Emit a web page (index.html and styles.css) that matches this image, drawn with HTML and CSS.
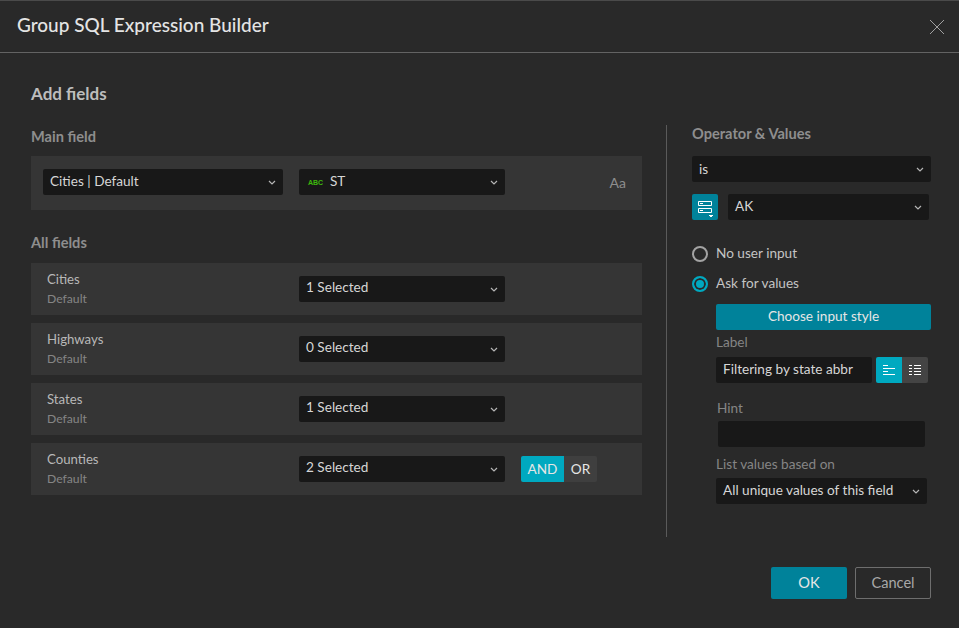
FILE: index.html
```html
<!DOCTYPE html>
<html lang="en">
<head>
    <meta charset="UTF-8">
    <meta name="viewport" content="width=device-width, initial-scale=1.0">
    <title>Group SQL Expression Builder</title>
    <link rel="stylesheet" href="styles.css">
</head>
<body>
    <div class="modal">
        <div class="modal-header">
            <h1>Group SQL Expression Builder</h1>
            <svg class="close-icon" width="16" height="16" viewBox="0 0 16 16"><path d="M1 1l14 14M15 1L1 15"/></svg>
        </div>

        <div class="modal-body">
            <div class="fields-panel">
                <h2>Add fields</h2>

                <h3 class="main-title">Main field</h3>
                <div class="main-row">
                    <div class="select main-layer">Cities | Default<svg class="chevron" width="8" height="5" viewBox="0 0 8 5"><path d="M1 1l3 3 3-3"/></svg></div>
                    <div class="select field-select"><span class="abc">ABC</span>ST<svg class="chevron" width="8" height="5" viewBox="0 0 8 5"><path d="M1 1l3 3 3-3"/></svg></div>
                    <span class="case">Aa</span>
                </div>

                <h3 class="all-title">All fields</h3>
                <div class="rows">
                    <div class="field-row">
                        <div class="layer"><div class="layer-name">Cities</div><div class="layer-sub">Default</div></div>
                        <div class="select field-select">1 Selected<svg class="chevron" width="8" height="5" viewBox="0 0 8 5"><path d="M1 1l3 3 3-3"/></svg></div>
                    </div>
                    <div class="field-row">
                        <div class="layer"><div class="layer-name">Highways</div><div class="layer-sub">Default</div></div>
                        <div class="select field-select">0 Selected<svg class="chevron" width="8" height="5" viewBox="0 0 8 5"><path d="M1 1l3 3 3-3"/></svg></div>
                    </div>
                    <div class="field-row">
                        <div class="layer"><div class="layer-name">States</div><div class="layer-sub">Default</div></div>
                        <div class="select field-select">1 Selected<svg class="chevron" width="8" height="5" viewBox="0 0 8 5"><path d="M1 1l3 3 3-3"/></svg></div>
                    </div>
                    <div class="field-row">
                        <div class="layer"><div class="layer-name">Counties</div><div class="layer-sub">Default</div></div>
                        <div class="select field-select">2 Selected<svg class="chevron" width="8" height="5" viewBox="0 0 8 5"><path d="M1 1l3 3 3-3"/></svg></div>
                        <div class="and-or">
                            <span class="seg-and">AND</span>
                            <span class="seg-or">OR</span>
                        </div>
                    </div>
                </div>
            </div>

            <div class="divider"></div>

            <div class="values-panel">
                <h3 class="values-title">Operator &amp; Values</h3>
                <div class="select op-select">is<svg class="chevron" width="8" height="5" viewBox="0 0 8 5"><path d="M1 1l3 3 3-3"/></svg></div>
                <div class="value-row">
                    <div class="source-btn">
                        <svg width="18" height="20" viewBox="0 0 18 20">
                            <path class="stroke" d="M2.5 4.5h13v4h-13zM2.5 11.5h13v4h-13zM4 6.5h3M4 13.5h3"/>
                            <path class="fill" d="M13 18h4v1h-1v1h-2v-1h-1z"/>
                        </svg>
                    </div>
                    <div class="select value-select">AK<svg class="chevron" width="8" height="5" viewBox="0 0 8 5"><path d="M1 1l3 3 3-3"/></svg></div>
                </div>

                <div class="radio-row first"><span class="radio"></span><span class="radio-text">No user input</span></div>
                <div class="radio-row"><span class="radio checked"></span><span class="radio-text">Ask for values</span></div>

                <div class="ask-options">
                    <div class="style-btn">Choose input style</div>
                    <div class="opt-label label-title">Label</div>
                    <div class="label-row">
                        <div class="input label-input">Filtering by state abbr</div>
                        <div class="toggle">
                            <span class="toggle-on">
                                <svg width="14" height="14" viewBox="0 0 14 14"><path d="M1 2.5h5M1 5.5h12M1 8.5h5M1 11.5h12"/></svg>
                            </span>
                            <span class="toggle-off">
                                <svg width="14" height="14" viewBox="0 0 14 14"><path d="M1 2.5h3M6 2.5h7M1 5.5h3M6 5.5h7M1 8.5h3M6 8.5h7M1 11.5h3M6 11.5h7"/></svg>
                            </span>
                        </div>
                    </div>
                    <div class="opt-label hint-title">Hint</div>
                    <div class="input hint-input"></div>
                    <div class="opt-label list-title">List values based on</div>
                    <div class="select list-select">All unique values of this field<svg class="chevron" width="8" height="5" viewBox="0 0 8 5"><path d="M1 1l3 3 3-3"/></svg></div>
                </div>
            </div>
        </div>

        <div class="modal-footer">
            <button class="btn-ok">OK</button>
            <button class="btn-cancel">Cancel</button>
        </div>
    </div>
</body>
</html>
```

FILE: styles.css
```css
body {
    margin: 0;
    font-family: Lato, "Open Sans", sans-serif;
    background-color: #292929;
    color: #d6d6d6;
    font-size: 13.6px;
}

.modal {
    height: 628px;
    box-sizing: border-box;
    border-top: 1px solid #4a4a4a;
    display: flex;
    flex-direction: column;
}

.modal-header {
    height: 51px;
    border-bottom: 1px solid #636363;
    display: flex;
    justify-content: space-between;
    align-items: center;
    padding: 0 14px 0 17px;
}

.modal-header h1 {
    margin: 0 0 5px;
    font-size: 19px;
    font-weight: 500;
    color: #e4e4e4;
}

.close-icon path {
    stroke: #a0a0a0;
    fill: none;
}

.modal-body {
    display: flex;
    padding-left: 31px;
}

.fields-panel {
    width: 611px;
    padding-top: 31px;
}

h2 {
    margin: 0;
    font-size: 17px;
    line-height: 20px;
    font-weight: 700;
    color: #bdbdbd;
}

h3 {
    margin: 0;
    font-size: 14.6px;
    line-height: 20px;
    font-weight: 700;
    color: #8e8e8e;
}

.main-title {
    margin-top: 23px;
    margin-bottom: 9px;
}

.all-title {
    margin-top: 23px;
    margin-bottom: 10px;
}

.main-row {
    height: 54px;
    box-sizing: border-box;
    background-color: #353535;
    display: flex;
    align-items: center;
    padding: 0 16px 2px 12px;
}

.main-layer {
    width: 240px;
    margin-right: 16px;
}

.case {
    margin-left: auto;
    font-size: 14px;
    color: #8e8e8e;
}

.select {
    height: 26px;
    box-sizing: border-box;
    background-color: #181818;
    border-radius: 2px;
    display: flex;
    align-items: center;
    padding: 0 7px 3px;
    color: #d6d6d6;
}

.chevron {
    margin-left: auto;
    margin-top: 3px;
}

.chevron path {
    stroke: #b5b5b5;
    stroke-width: 1.2;
    fill: none;
}

.field-select {
    width: 206px;
}

.field-row .select {
    padding-bottom: 5px;
}

.field-row .chevron {
    margin-top: 5px;
}

.abc {
    font-family: "Liberation Sans", sans-serif;
    font-size: 7px;
    font-weight: 700;
    color: #3db80c;
    width: 24px;
    padding-left: 2px;
    box-sizing: border-box;
    margin-top: 4px;
}

.rows {
    display: flex;
    flex-direction: column;
    gap: 8px;
}

.field-row {
    height: 52px;
    background-color: #353535;
    display: flex;
    align-items: center;
    padding-left: 16px;
}

.layer {
    width: 252px;
    line-height: 20px;
}

.layer-name {
    font-size: 13.2px;
    color: #b8b8b8;
}

.layer-sub {
    font-size: 12.2px;
    color: #858585;
}

.and-or {
    display: flex;
    height: 26px;
    line-height: 26px;
    margin-left: 16px;
    text-align: center;
    color: #e6e6e6;
}

.seg-and {
    width: 43px;
    background-color: #00a9c0;
    border-radius: 2px 0 0 2px;
}

.seg-or {
    width: 33px;
    background-color: #3f3f3f;
    border-radius: 0 2px 2px 0;
}

.divider {
    width: 1px;
    height: 412px;
    margin: 72px 25px 0 24px;
    background-color: #5a5a5a;
}

.values-panel {
    width: 239px;
    padding-top: 71px;
}

.values-title {
    margin-bottom: 12px;
}

.value-row {
    display: flex;
    margin-top: 12px;
}

.source-btn {
    width: 26px;
    height: 26px;
    background-color: #00829a;
    border-radius: 2px;
    display: flex;
    align-items: center;
    justify-content: center;
    margin-right: 10px;
}

.source-btn .stroke {
    stroke: #fff;
    fill: none;
}

.source-btn .fill {
    fill: #fff;
}

.value-select {
    width: 201px;
}

.op-select {
    padding-bottom: 1px;
}

.op-select .chevron {
    margin-top: 1px;
}

.radio-row {
    display: flex;
    align-items: center;
    height: 20px;
    margin-top: 10px;
    color: #c4c4c4;
}

.radio-row.first {
    margin-top: 24px;
}

.radio-text {
    margin-bottom: 2px;
}

.radio {
    width: 16px;
    height: 16px;
    box-sizing: border-box;
    border: 2px solid #a3a3a3;
    border-radius: 50%;
    margin-right: 8px;
}

.radio.checked {
    border-color: #00a9c0;
    background-color: #00a9c0;
    box-shadow: inset 0 0 0 2px #292929;
}

.ask-options {
    margin-left: 24px;
    margin-top: 10px;
}

.style-btn {
    height: 26px;
    line-height: 25px;
    text-align: center;
    background-color: #00829a;
    border-radius: 2px;
    color: #e6e6e6;
}

.opt-label {
    line-height: 20px;
    color: #858585;
}

.label-title {
    margin-top: 2px;
    margin-bottom: 5px;
}

.label-row {
    display: flex;
}

.input {
    height: 26px;
    box-sizing: border-box;
    background-color: #181818;
    border-radius: 2px;
    line-height: 24px;
    padding: 0 7px;
}

.label-input {
    width: 156px;
}

.toggle {
    display: flex;
    margin-left: 4px;
}

.toggle span {
    width: 26px;
    height: 26px;
    display: flex;
    align-items: center;
    justify-content: center;
}

.toggle path {
    stroke: #fff;
    fill: none;
}

.toggle-on {
    background-color: #00a9c0;
    border-radius: 2px 0 0 2px;
}

.toggle-off {
    background-color: #444;
    border-radius: 0 2px 2px 0;
}

.hint-title {
    margin: 15px 0 3px 1px;
}

.hint-input {
    width: 207px;
    margin-left: 2px;
}

.list-title {
    margin-top: 7px;
    margin-bottom: 4px;
}

.list-select {
    width: 211px;
}

.modal-footer {
    margin-top: auto;
    padding: 0 28px 29px 0;
    display: flex;
    justify-content: flex-end;
    gap: 8px;
}

.modal-footer button {
    width: 76px;
    height: 32px;
    box-sizing: border-box;
    font-family: inherit;
    font-size: 14.6px;
    border-radius: 2px;
    padding-bottom: 2px;
}

.btn-ok {
    border: none;
    background-color: #00829a;
    color: #e6e6e6;
}

.btn-cancel {
    border: 1px solid #6e6e6e;
    background: none;
    color: #a8a8a8;
}
```
